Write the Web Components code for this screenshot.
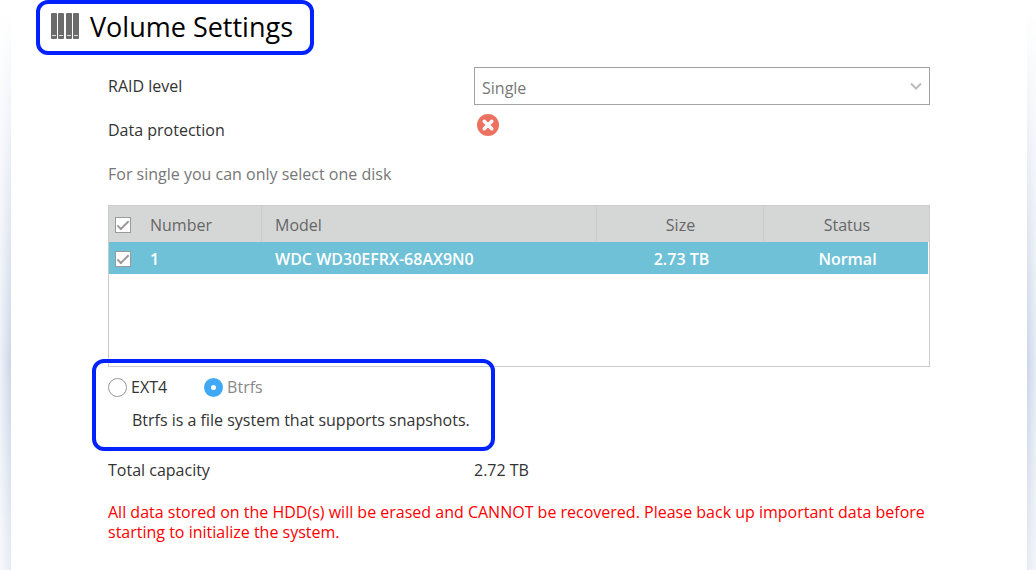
<!DOCTYPE html>
<html lang="en">
<head>
<meta charset="utf-8">
<meta name="viewport" content="width=device-width, initial-scale=1">
<title>Volume Settings</title>
<style>
    body {
        margin: 0;
        font: 16px/20px "Open Sans", "Noto Sans", sans-serif;
        color: #333;
    }
</style>
</head>
<body>
<setup-page>
    <callout-frame slot="title">
        <page-title>Volume Settings</page-title>
    </callout-frame>

    <settings-row>
        <label slot="label" for="raid">RAID level</label>
        <select-box>
            <select id="raid">
                <option>Single</option>
            </select>
        </select-box>
    </settings-row>
    <settings-row class="tall">
        <span slot="label">Data protection</span>
        <status-icon></status-icon>
    </settings-row>
    <hint-text>For single you can only select one disk</hint-text>
    <disk-table></disk-table>
    <callout-frame class="wide">
        <file-system></file-system>
    </callout-frame>
    <settings-row>
        <span slot="label">Total capacity</span>
        <span>2.72 TB</span>
    </settings-row>
    <warning-text>All data stored on the HDD(s) will be erased and CANNOT be recovered. Please back up important data before starting to initialize the system.</warning-text>
</setup-page>

<script>
// Small helper: every element here is a static template in an open shadow root
function define(name, html) {
    customElements.define(name, class extends HTMLElement {
        constructor() {
            super();
            this.attachShadow({ mode: 'open' });
            this.shadowRoot.innerHTML = html;
        }
    });
}

define('setup-page', `
    <style>
        :host {
            display: block;
            box-sizing: border-box;
            min-height: 100vh;
            padding: 0 9px 0 11px;
            background:
                linear-gradient(#fff 2%, transparent 64%, #ffffff88 100%),
                linear-gradient(90deg, #eff2f8, #ccd6e9 11px, #ccd6e9 calc(100% - 9px), #e6ebf4);
        }
        main {
            box-sizing: border-box;
            min-height: 100vh;
            background: #fff;
        }
        header {
            display: flex;
            padding-left: 25px;
        }
        .form {
            display: flex;
            flex-direction: column;
            padding: 12px 97px 24px;
        }
    </style>
    <main>
        <header><slot name="title"></slot></header>
        <div class="form"><slot></slot></div>
    </main>
`);

define('callout-frame', `
    <style>
        :host {
            display: block;
            box-sizing: border-box;
            position: relative;
            border: 4px solid #0022ff;
            border-radius: 12px;
        }
        :host(.wide) {
            width: 403px;
            margin: -8px 0 0 -16px;
        }
    </style>
    <slot></slot>
`);

define('page-title', `
    <style>
        :host {
            display: flex;
            gap: 10px;
            padding: 4px 17px 5px 11px;
        }
        svg { margin-top: 5px; }
        h1 {
            margin: 0;
            font-size: 27px;
            font-weight: 400;
            line-height: 38px;
            color: #000;
        }
    </style>
    <svg width="29" height="26" aria-hidden="true">
        <g fill="#6b6b6b">
            <rect width="6" height="26" rx="1"/>
            <rect x="7" width="6" height="26" rx="1"/>
            <rect x="15" width="6" height="26" rx="1"/>
            <rect x="22" width="6" height="26" rx="1"/>
        </g>
        <path d="M1 22.5h4M8 22.5h4M16 22.5h4M23 22.5h4" stroke="#ddd"/>
    </svg>
    <h1><slot></slot></h1>
`);

define('settings-row', `
    <style>
        :host {
            display: grid;
            grid-template-columns: 366px 1fr;
            align-items: center;
            min-height: 38px;
        }
        :host(.tall) { min-height: 50px; }
    </style>
    <slot name="label"></slot>
    <slot></slot>
`);

define('select-box', `
    <style>
        :host { display: grid; align-items: center; }
        ::slotted(select) {
            grid-area: 1 / 1;
            appearance: none;
            box-sizing: border-box;
            width: 100%;
            height: 38px;
            padding: 4px 32px 0 7px;
            border: 1px solid #a3a3a3;
            border-radius: 0;
            background: #fff;
            color: #777;
            font: inherit;
        }
        svg {
            grid-area: 1 / 1;
            justify-self: end;
            margin-right: 8px;
            pointer-events: none;
        }
    </style>
    <slot></slot>
    <svg width="12" height="8" fill="none" stroke="#bbb" stroke-width="2" aria-hidden="true">
        <path d="M1 1.5l5 5 5-5"/>
    </svg>
`);

define('status-icon', `
    <style>
        :host { display: flex; align-self: start; padding: 9px 0 0 3px; }
    </style>
    <svg width="22" height="22" role="img" aria-label="Not protected">
        <circle cx="11" cy="11" r="11" fill="#ed7161"/>
        <path d="M7.2 7.2l7.6 7.6M14.8 7.2l-7.6 7.6" stroke="#fff" stroke-width="3.4" stroke-linecap="round"/>
    </svg>
`);

define('hint-text', `
    <style>
        :host { display: block; padding: 9px 0 21px; color: #777; }
    </style>
    <slot></slot>
`);

define('disk-table', `
    <style>
        :host {
            display: block;
            box-sizing: border-box;
            min-height: 162px;
            border: 1px solid #ccc;
        }
        table {
            width: 100%;
            table-layout: fixed;
            border-collapse: separate;
            border-spacing: 0;
        }
        th, td {
            box-sizing: border-box;
            padding: 2px 0 0 14px;
            text-align: left;
        }
        th {
            height: 36px;
            background: #d5d7d6;
            color: #666;
            font-weight: 400;
        }
        th + th { box-shadow: inset 1px 0 #cacccb; }
        td {
            height: 32px;
            background: #6ec1d7;
            color: #fff;
            font-weight: 600;
        }
        td:last-child { border-right: 1px solid #fff; }
        .number { width: 152px; }
        .size { width: 167px; }
        .status { width: 166px; }
        th:nth-child(n+3) { padding-left: 2px; text-align: center; }
        td:nth-child(n+3) { padding-left: 4px; text-align: center; }
        th:first-child, td:first-child { padding-left: 6px; }
        label {
            display: flex;
            align-items: center;
            gap: 19px;
        }
        input {
            appearance: none;
            display: grid;
            place-items: center;
            box-sizing: border-box;
            width: 16px;
            height: 16px;
            margin: 0;
            border: 1px solid #999;
            background: #fff;
        }
        input:checked::after {
            content: "";
            box-sizing: border-box;
            width: 12px;
            height: 6px;
            margin-bottom: 3px;
            border: solid #999;
            border-width: 0 0 2px 2px;
            transform: rotate(-45deg);
        }
    </style>
    <table>
        <colgroup><col class="number"><col><col class="size"><col class="status"></colgroup>
        <thead>
            <tr>
                <th><label><input type="checkbox" checked>Number</label></th>
                <th>Model</th>
                <th>Size</th>
                <th>Status</th>
            </tr>
        </thead>
        <tbody>
            <tr>
                <td><label><input type="checkbox" checked>1</label></td>
                <td>WDC WD30EFRX-68AX9N0</td>
                <td>2.73 TB</td>
                <td>Normal</td>
            </tr>
        </tbody>
    </table>
`);

define('file-system', `
    <style>
        :host { display: block; padding: 14px 12px 17px; }
        .options { display: flex; gap: 37px; }
        label {
            display: flex;
            align-items: center;
            gap: 4px;
        }
        input {
            appearance: none;
            box-sizing: border-box;
            width: 19px;
            height: 19px;
            margin: 0;
            border: 1px solid #999;
            border-radius: 50%;
            background: #fff;
        }
        input:checked { border: 7px solid #3fa9f5; }
        label:has(:checked) { color: #888; }
        p { margin: 13px 0 0 24px; }
    </style>
    <div class="options">
        <label><input type="radio" name="fs">EXT4</label>
        <label><input type="radio" name="fs" checked>Btrfs</label>
    </div>
    <p>Btrfs is a file system that supports snapshots.</p>
`);

define('warning-text', `
    <style>
        :host { display: block; padding-top: 13px; color: #f00; }
    </style>
    <slot></slot>
`);
</script>
</body>
</html>
